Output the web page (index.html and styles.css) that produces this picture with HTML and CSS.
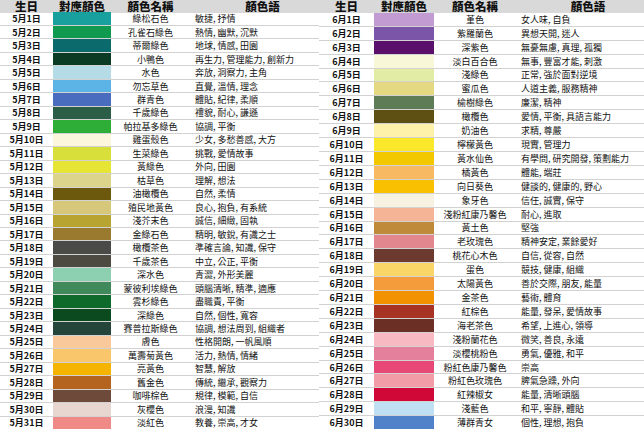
FILE: index.html
```html
<!DOCTYPE html>
<html lang="zh-Hant">
<head>
<meta charset="utf-8">
<title>生日顏色</title>
<link rel="stylesheet" href="styles.css">
</head>
<body>
<div class="page">
  <div class="table left">
    <div class="row head"><div class="c date">生日</div><div class="c sw">對應顏色</div><div class="c name">顏色名稱</div><div class="c lang">顏色語</div></div>
    <div class="row"><div class="c date">5月1日</div><div class="c sw" style="background:#17a09d"></div><div class="c name">綠松石色</div><div class="c lang">敏捷, 抒情</div></div>
    <div class="row"><div class="c date">5月2日</div><div class="c sw" style="background:#0f9a50"></div><div class="c name">孔雀石綠色</div><div class="c lang">熱情, 幽默, 沉默</div></div>
    <div class="row"><div class="c date">5月3日</div><div class="c sw" style="background:#0b6a6c"></div><div class="c name">蒂爾綠色</div><div class="c lang">地球, 情感, 田園</div></div>
    <div class="row"><div class="c date">5月4日</div><div class="c sw" style="background:#0b3a25"></div><div class="c name">小鴨色</div><div class="c lang">再生力, 管理能力, 創新力</div></div>
    <div class="row"><div class="c date">5月5日</div><div class="c sw" style="background:#b5dbe7"></div><div class="c name">水色</div><div class="c lang">奔放, 洞察力, 主角</div></div>
    <div class="row"><div class="c date">5月6日</div><div class="c sw" style="background:#5cb3e6"></div><div class="c name">勿忘草色</div><div class="c lang">直覺, 溫情, 理念</div></div>
    <div class="row"><div class="c date">5月7日</div><div class="c sw" style="background:#4a6cbf"></div><div class="c name">群青色</div><div class="c lang">體貼, 紀律, 柔順</div></div>
    <div class="row"><div class="c date">5月8日</div><div class="c sw" style="background:#2c5d47"></div><div class="c name">千歲綠色</div><div class="c lang">禮貌, 耐心, 謙遜</div></div>
    <div class="row"><div class="c date">5月9日</div><div class="c sw" style="background:#2eae36"></div><div class="c name">帕拉基多綠色</div><div class="c lang">協調, 平衡</div></div>
    <div class="row"><div class="c date">5月10日</div><div class="c sw" style="background:#fbf6dc"></div><div class="c name">雞蛋殼色</div><div class="c lang">少女, 多愁善感, 大方</div></div>
    <div class="row"><div class="c date">5月11日</div><div class="c sw" style="background:#d8df3a"></div><div class="c name">生菜綠色</div><div class="c lang">挑戰, 愛情故事</div></div>
    <div class="row"><div class="c date">5月12日</div><div class="c sw" style="background:#e6e535"></div><div class="c name">黃綠色</div><div class="c lang">外向, 田園</div></div>
    <div class="row"><div class="c date">5月13日</div><div class="c sw" style="background:#ddd48c"></div><div class="c name">枯草色</div><div class="c lang">理解, 想法</div></div>
    <div class="row"><div class="c date">5月14日</div><div class="c sw" style="background:#6d590d"></div><div class="c name">油橄欖色</div><div class="c lang">自然, 柔情</div></div>
    <div class="row"><div class="c date">5月15日</div><div class="c sw" style="background:#d7c77b"></div><div class="c name">殖民地黃色</div><div class="c lang">良心, 抱負, 有系統</div></div>
    <div class="row"><div class="c date">5月16日</div><div class="c sw" style="background:#b8a430"></div><div class="c name">淺芥末色</div><div class="c lang">誠信, 細緻, 固執</div></div>
    <div class="row"><div class="c date">5月17日</div><div class="c sw" style="background:#997a2f"></div><div class="c name">金綠石色</div><div class="c lang">精明, 敏銳, 有識之士</div></div>
    <div class="row"><div class="c date">5月18日</div><div class="c sw" style="background:#4a4a47"></div><div class="c name">橄欖茶色</div><div class="c lang">準確言論, 知識, 保守</div></div>
    <div class="row"><div class="c date">5月19日</div><div class="c sw" style="background:#4d4a41"></div><div class="c name">千歲茶色</div><div class="c lang">中立, 公正, 平衡</div></div>
    <div class="row"><div class="c date">5月20日</div><div class="c sw" style="background:#8dcfb1"></div><div class="c name">深水色</div><div class="c lang">青澀, 外形美麗</div></div>
    <div class="row"><div class="c date">5月21日</div><div class="c sw" style="background:#3f895a"></div><div class="c name">蒙彼利埃綠色</div><div class="c lang">頭腦清晰, 精準, 適應</div></div>
    <div class="row"><div class="c date">5月22日</div><div class="c sw" style="background:#0e6a2b"></div><div class="c name">雲杉綠色</div><div class="c lang">盡職責, 平衡</div></div>
    <div class="row"><div class="c date">5月23日</div><div class="c sw" style="background:#0b491f"></div><div class="c name">深綠色</div><div class="c lang">自然, 個性, 寬容</div></div>
    <div class="row"><div class="c date">5月24日</div><div class="c sw" style="background:#24463a"></div><div class="c name">賽普拉斯綠色</div><div class="c lang">協調, 想法周到, 組織者</div></div>
    <div class="row"><div class="c date">5月25日</div><div class="c sw" style="background:#f9c99b"></div><div class="c name">膚色</div><div class="c lang">性格開朗, 一帆風順</div></div>
    <div class="row"><div class="c date">5月26日</div><div class="c sw" style="background:#f9c66b"></div><div class="c name">萬壽菊黃色</div><div class="c lang">活力, 熱情, 情緒</div></div>
    <div class="row"><div class="c date">5月27日</div><div class="c sw" style="background:#f5b400"></div><div class="c name">亮黃色</div><div class="c lang">智慧, 解放</div></div>
    <div class="row"><div class="c date">5月28日</div><div class="c sw" style="background:#b4641e"></div><div class="c name">舊金色</div><div class="c lang">傳統, 繼承, 觀察力</div></div>
    <div class="row"><div class="c date">5月29日</div><div class="c sw" style="background:#6e4a3b"></div><div class="c name">咖啡棕色</div><div class="c lang">規律, 模範, 自信</div></div>
    <div class="row"><div class="c date">5月30日</div><div class="c sw" style="background:#e8d7d1"></div><div class="c name">灰櫻色</div><div class="c lang">浪漫, 知識</div></div>
    <div class="row"><div class="c date">5月31日</div><div class="c sw" style="background:#f08a86"></div><div class="c name">淡紅色</div><div class="c lang">教養, 崇高, 才女</div></div>
  </div>
  <div class="table right">
    <div class="row head"><div class="c date">生日</div><div class="c sw">對應顏色</div><div class="c name">顏色名稱</div><div class="c lang">顏色語</div></div>
    <div class="row"><div class="c date">6月1日</div><div class="c sw" style="background:#c39bd3"></div><div class="c name">堇色</div><div class="c lang">女人味, 自負</div></div>
    <div class="row"><div class="c date">6月2日</div><div class="c sw" style="background:#7b55a8"></div><div class="c name">紫羅蘭色</div><div class="c lang">異想天開, 迷人</div></div>
    <div class="row"><div class="c date">6月3日</div><div class="c sw" style="background:#5a0f6a"></div><div class="c name">深紫色</div><div class="c lang">無憂無慮, 真理, 孤獨</div></div>
    <div class="row"><div class="c date">6月4日</div><div class="c sw" style="background:#f8f8d9"></div><div class="c name">淡白百合色</div><div class="c lang">無事, 豐富才能, 刺激</div></div>
    <div class="row"><div class="c date">6月5日</div><div class="c sw" style="background:#e2eca5"></div><div class="c name">淺綠色</div><div class="c lang">正常, 強於面對逆境</div></div>
    <div class="row"><div class="c date">6月6日</div><div class="c sw" style="background:#e5d882"></div><div class="c name">蜜瓜色</div><div class="c lang">人道主義, 服務精神</div></div>
    <div class="row"><div class="c date">6月7日</div><div class="c sw" style="background:#5e7d57"></div><div class="c name">榆樹綠色</div><div class="c lang">廉潔, 精神</div></div>
    <div class="row"><div class="c date">6月8日</div><div class="c sw" style="background:#5e4f12"></div><div class="c name">橄欖色</div><div class="c lang">愛情, 平衡, 具語言能力</div></div>
    <div class="row"><div class="c date">6月9日</div><div class="c sw" style="background:#fef2aa"></div><div class="c name">奶油色</div><div class="c lang">求精, 尊嚴</div></div>
    <div class="row"><div class="c date">6月10日</div><div class="c sw" style="background:#fbe82b"></div><div class="c name">檸檬黃色</div><div class="c lang">現實, 管理力</div></div>
    <div class="row"><div class="c date">6月11日</div><div class="c sw" style="background:#f4c800"></div><div class="c name">黃水仙色</div><div class="c lang">有學問, 研究開發, 策劃能力</div></div>
    <div class="row"><div class="c date">6月12日</div><div class="c sw" style="background:#f7b961"></div><div class="c name">橘黃色</div><div class="c lang">體能, 端莊</div></div>
    <div class="row"><div class="c date">6月13日</div><div class="c sw" style="background:#f8c000"></div><div class="c name">向日葵色</div><div class="c lang">健談的, 健康的, 野心</div></div>
    <div class="row"><div class="c date">6月14日</div><div class="c sw" style="background:#f6f1e1"></div><div class="c name">象牙色</div><div class="c lang">信任, 誠實, 保守</div></div>
    <div class="row"><div class="c date">6月15日</div><div class="c sw" style="background:#f6b497"></div><div class="c name">淺粉紅康乃馨色</div><div class="c lang">耐心, 進取</div></div>
    <div class="row"><div class="c date">6月16日</div><div class="c sw" style="background:#c08a3b"></div><div class="c name">黃土色</div><div class="c lang">堅強</div></div>
    <div class="row"><div class="c date">6月17日</div><div class="c sw" style="background:#e3878f"></div><div class="c name">老玫瑰色</div><div class="c lang">精神安定, 業餘愛好</div></div>
    <div class="row"><div class="c date">6月18日</div><div class="c sw" style="background:#6d3a2f"></div><div class="c name">桃花心木色</div><div class="c lang">自信, 從容, 自然</div></div>
    <div class="row"><div class="c date">6月19日</div><div class="c sw" style="background:#f9d467"></div><div class="c name">蛋色</div><div class="c lang">競技, 健康, 組織</div></div>
    <div class="row"><div class="c date">6月20日</div><div class="c sw" style="background:#f49c3c"></div><div class="c name">太陽黃色</div><div class="c lang">善於交際, 朋友, 能量</div></div>
    <div class="row"><div class="c date">6月21日</div><div class="c sw" style="background:#f29200"></div><div class="c name">金茶色</div><div class="c lang">藝術, 體育</div></div>
    <div class="row"><div class="c date">6月22日</div><div class="c sw" style="background:#a73325"></div><div class="c name">紅棕色</div><div class="c lang">能量, 發呆, 愛情故事</div></div>
    <div class="row"><div class="c date">6月23日</div><div class="c sw" style="background:#6c2f25"></div><div class="c name">海老茶色</div><div class="c lang">希望, 上進心, 領導</div></div>
    <div class="row"><div class="c date">6月24日</div><div class="c sw" style="background:#f8b9c3"></div><div class="c name">淺粉蘭花色</div><div class="c lang">微笑, 善良, 永遠</div></div>
    <div class="row"><div class="c date">6月25日</div><div class="c sw" style="background:#e5809c"></div><div class="c name">淡櫻桃粉色</div><div class="c lang">勇氣, 優雅, 和平</div></div>
    <div class="row"><div class="c date">6月26日</div><div class="c sw" style="background:#e84878"></div><div class="c name">粉紅色康乃馨色</div><div class="c lang">崇高</div></div>
    <div class="row"><div class="c date">6月27日</div><div class="c sw" style="background:#f29ca8"></div><div class="c name">粉紅色玫瑰色</div><div class="c lang">脾氣急躁, 外向</div></div>
    <div class="row"><div class="c date">6月28日</div><div class="c sw" style="background:#d00838"></div><div class="c name">紅辣椒女</div><div class="c lang">能量, 清晰頭腦</div></div>
    <div class="row"><div class="c date">6月29日</div><div class="c sw" style="background:#bfe0f2"></div><div class="c name">淺藍色</div><div class="c lang">和平, 寧靜, 體貼</div></div>
    <div class="row"><div class="c date">6月30日</div><div class="c sw" style="background:#4f82c8"></div><div class="c name">薄群青女</div><div class="c lang">個性, 理想, 抱負</div></div>
  </div>
</div>
</body>
</html>
```
FILE: styles.css
```css
* { box-sizing: border-box; }
html, body {
  margin: 0;
  padding: 0;
  background: #ffffff;
}
body {
  font-family: "Noto Sans CJK TC", "Liberation Sans", sans-serif;
  color: #111111;
  font-size: 9px;
  overflow: hidden;
}
.page {
  display: flex;
  width: 644px;
  height: 429px;
  background: linear-gradient(#d9d9d9 0, #d9d9d9 13px, #ffffff 13px);
}
.table {
  display: flex;
  flex-direction: column;
  height: 429px;
}
.left { width: 319px; }
.right { width: 325px; }
.row {
  flex: 1 1 0;
  display: grid;
  align-items: stretch;
  border-bottom: 1px solid #d2d2d2;
  min-height: 0;
}
.left .row { grid-template-columns: 53px 58px 79px 1fr; }
.right .row { grid-template-columns: 55px 60px 82px 1fr; }
.row:last-child { border-bottom: none; }
.c {
  display: flex;
  align-items: center;
  line-height: 11px;
  white-space: nowrap;
  min-width: 0;
}
.date {
  justify-content: center;
  font-weight: 700;
}
.name { justify-content: center; }
.lang { padding-left: 5px; }
.head {
  background: #d9d9d9;
  border-bottom: none;
}
.head .c {
  justify-content: center;
  font-size: 11.5px;
  line-height: 12px;
  font-weight: 900;
  padding: 0;
}
.head .lang { padding-left: 16px; }
```
